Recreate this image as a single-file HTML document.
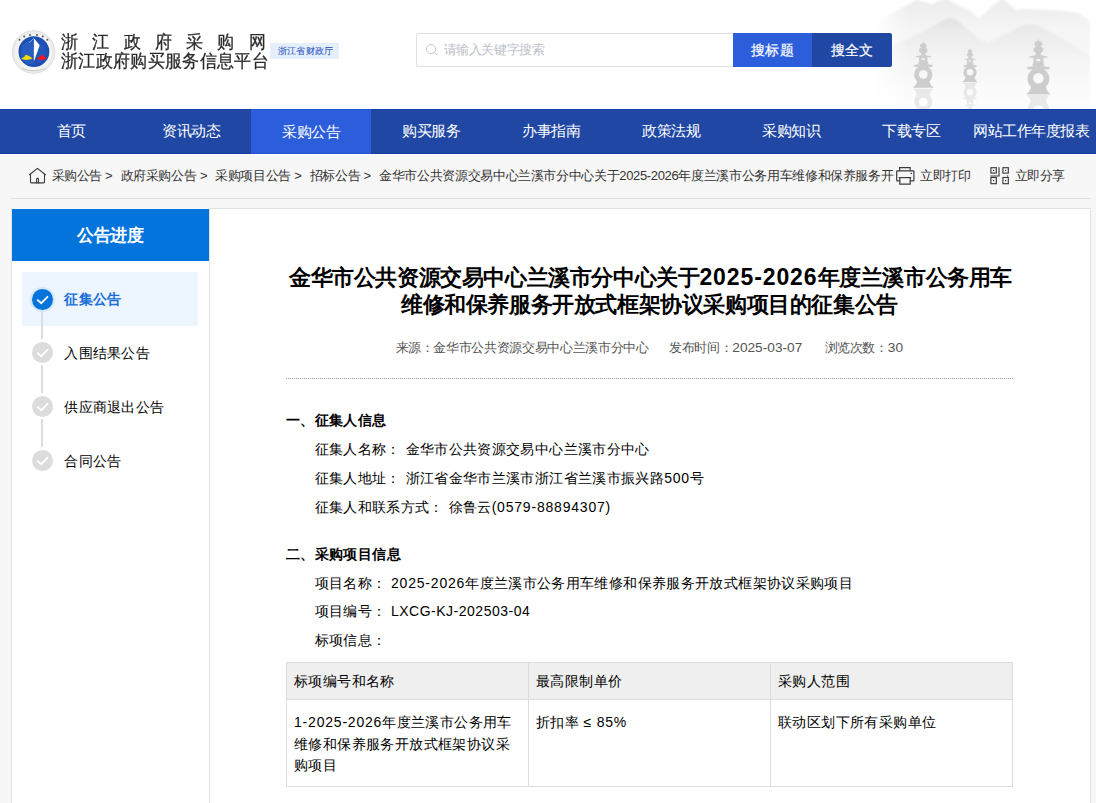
<!DOCTYPE html>
<html><head><meta charset="utf-8">
<style>
*{margin:0;padding:0;box-sizing:border-box}
html,body{width:1096px;height:803px;overflow:hidden;background:#f7f7f7;font-family:"Liberation Sans",sans-serif;color:#333}
.a{position:absolute;white-space:nowrap}
#header{position:absolute;left:0;top:0;width:1096px;height:109px;background:#fff;overflow:hidden}
#nav{position:absolute;left:0;top:109px;width:1096px;height:45px;background:#1f47a3;border-top:1px solid #163e9b;border-bottom:1px solid #163e9b}
#nav .it{position:absolute;top:-1px;height:45px;width:120px;text-align:center;line-height:44px;font-size:15px;letter-spacing:-.5px;color:#fff}
#nav .on{background:#2c5ddb;border-top:1px solid #2254d8;border-bottom:1px solid #2254d8}
#navw{position:absolute;left:0;top:154px;width:1096px;height:1px;background:#fdfdfb}
.cr{position:absolute;top:167px;font-size:13px;letter-spacing:-.35px;line-height:18px;color:#333;white-space:nowrap}
.gt{position:absolute;top:167px;font-size:13px;line-height:18px;color:#333}
.t14{font-size:14px;letter-spacing:.3px;line-height:18px;color:#000}
.step{position:absolute;left:22px;width:176px;height:54px}
.step.on{background:#edf5fe}
.cc{position:absolute;width:21px;height:21px;border-radius:50%;background:#dcdcdc}
.cc.on{background:#0474dc;box-shadow:0 0 0 2px #d3e6fb}
.cc svg{position:absolute;left:4px;top:5px}
.vl{position:absolute;left:41px;width:2px;background:#dcdcdc}
.ttl{position:absolute;font-size:22px;letter-spacing:-0.4px;font-weight:bold;color:#000;line-height:27px;white-space:nowrap}
.ttl .d{font-size:23px;letter-spacing:.9px}
.meta{position:absolute;top:339px;font-size:13px;letter-spacing:-.35px;color:#555;line-height:18px;white-space:nowrap}
.art{position:absolute;font-size:14px;letter-spacing:.37px;color:#000;line-height:18px;white-space:nowrap}
.art b{color:#000}
.n{letter-spacing:.8px}
.md{font-size:13.7px;letter-spacing:0}
.tb{position:absolute;background:#ddd}
.td{position:absolute;font-size:14px;letter-spacing:.4px;color:#000;line-height:21.7px;white-space:nowrap}
</style></head><body>
<div id="header">
  <!-- mountains -->
  <svg class="a" style="left:850px;top:0" width="246" height="109" viewBox="850 0 246 109">
    <defs>
      <linearGradient id="mt1" gradientUnits="userSpaceOnUse" x1="0" y1="0" x2="0" y2="60">
        <stop offset="0" stop-color="#ebebeb"/>
        <stop offset=".35" stop-color="#f3f3f3"/>
        <stop offset="1" stop-color="#fafafa"/>
      </linearGradient>
      <linearGradient id="mt2" gradientUnits="userSpaceOnUse" x1="0" y1="17" x2="0" y2="100">
        <stop offset="0" stop-color="#e0e0e0"/>
        <stop offset=".18" stop-color="#ebebeb"/>
        <stop offset=".5" stop-color="#f4f4f4"/>
        <stop offset="1" stop-color="#fdfdfd"/>
      </linearGradient>
      <linearGradient id="lf" gradientUnits="userSpaceOnUse" x1="872" y1="0" x2="908" y2="0">
        <stop offset="0" stop-color="#fff" stop-opacity="1"/>
        <stop offset="1" stop-color="#fff" stop-opacity="0"/>
      </linearGradient>
      <filter id="bl" x="-20%" y="-20%" width="140%" height="140%"><feGaussianBlur stdDeviation="1.2"/></filter>
      <mask id="pm" maskUnits="userSpaceOnUse" x="-15" y="-2" width="30" height="60">
        <g fill="#fff">
          <path d="M0 0 L1.1 3.2 L-1.1 3.2Z"/>
          <ellipse cx="0" cy="5.6" rx="3.9" ry="3"/>
          <ellipse cx="0" cy="11.2" rx="5" ry="3.4"/>
          <rect x="-2.6" y="13.5" width="5.2" height="3.5"/>
          <path d="M-9.5 18.2 Q-5 17 0 16.3 Q5 17 9.5 18.2 L8.5 19.2 L-8.5 19.2Z"/>
          <rect x="-5" y="19" width="10" height="6.6"/>
          <rect x="-5.8" y="25.3" width="11.6" height="2.6"/>
          <path d="M-11.5 28.6 Q-6 27.8 0 27.2 Q6 27.8 11.5 28.6 L10.3 31 L-10.3 31Z"/>
          <circle cx="0" cy="40.2" r="10.9"/>
          <path d="M-7.5 48.5 Q-8.5 53.5 -12.5 55.7 L12.5 55.7 Q8.5 53.5 7.5 48.5Z"/>
        </g>
        <g fill="#000">
          <rect x="-2" y="20.5" width="4" height="2.2"/>
          <circle cx="0" cy="39.8" r="5.2"/>
        </g>
      </mask>
      
    </defs>
    <g filter="url(#bl)">
      <path d="M860 40 Q875 25 890 14 Q905 6 917 0 Q925 2 932 4.5 Q940 0 946 -1 Q958 6 969 10 Q975 14 979 18 Q992 6 1002 -1 Q1010 5 1016 10 Q1024 8 1031 9 Q1055 10 1076 12 Q1085 16 1090 22 L1090 109 L860 109Z" fill="url(#mt1)"/>
      <path d="M860 70 Q875 55 894 45 Q920 34 942 21 Q950 15 958 21 Q975 37 987 43 Q1000 38 1015 29 Q1030 21 1042 28 Q1070 42 1090 56 L1090 109 L860 109Z" fill="url(#mt2)"/>
    </g>
    <rect x="850" y="0" width="90" height="109" fill="url(#lf)"/>
    <rect x="1091" y="0" width="5" height="109" fill="#fff"/>
    <g transform="translate(923.3 41) scale(0.84)"><rect x="-15" y="-2" width="30" height="60" fill="#cdcdcd" mask="url(#pm)"/></g>
    <g transform="translate(970 48) scale(0.61)"><rect x="-15" y="-2" width="30" height="60" fill="#cdcdcd" mask="url(#pm)"/></g>
    <g transform="translate(1038.4 38.5)"><rect x="-15" y="-2" width="30" height="60" fill="#cdcdcd" mask="url(#pm)"/></g>
    <g opacity=".4">
      <g transform="translate(923.3 135.5) scale(0.84 -0.84)"><rect x="-15" y="-2" width="30" height="60" fill="#cdcdcd" mask="url(#pm)"/></g>
      <g transform="translate(970 116.5) scale(0.61 -0.61)"><rect x="-15" y="-2" width="30" height="60" fill="#cdcdcd" mask="url(#pm)"/></g>
      <g transform="translate(1038.4 150.2) scale(1 -1)"><rect x="-15" y="-2" width="30" height="60" fill="#cdcdcd" mask="url(#pm)"/></g>
    </g>
  </svg>
  <!-- logo -->
  <svg class="a" style="left:11px;top:29px" width="46" height="47" viewBox="11 29 46 47">
    <defs><filter id="lb"><feGaussianBlur stdDeviation=".35"/></filter></defs>
    <circle cx="33.6" cy="52" r="21.3" fill="#ebebeb"/>
    <circle cx="33.6" cy="52" r="21.3" fill="none" stroke="#dcdcdc" stroke-width=".9"/>
    <circle cx="33.6" cy="52" r="18.6" fill="#f3f3f3"/>
    <g fill="#5a5a5a" filter="url(#lb)">
      <circle cx="19.6" cy="39.8" r="1"/><circle cx="24.2" cy="36.6" r="1"/><circle cx="30" cy="35" r="1"/><circle cx="37" cy="35" r="1"/><circle cx="42.8" cy="36.6" r="1"/><circle cx="47.4" cy="39.8" r="1"/>
    </g>
    <path d="M22 68.5 Q33.6 73 45.5 68.5" fill="none" stroke="#9a9a9a" stroke-width=".7" opacity=".6"/>
    <circle cx="33.9" cy="51.7" r="15.4" fill="#1c50b3"/>
    <path d="M22 46 Q26 41 31 40.5 L33.5 41 L33.5 64 Q28 66 24 61 Q20 57 21.5 51 Z" fill="#2b62c6" opacity=".75"/>
    <path d="M36 42 Q42 43 45 48 Q47 54 44 60 L38 63 Z" fill="#245ac0" opacity=".6"/>
    <path d="M29.1 42.8 L33.9 38.3" stroke="#8fb3ea" stroke-width=".9"/>
    <path d="M33.9 38.2 L39.7 45.3 L34.3 60.4 L33.8 60.4 Z" fill="#fff"/>
    <path d="M21 58.5 Q23.5 57.6 25.2 56 L24.6 55.2 Q27 54.8 28.6 55.8 Q31 57 32.4 58.6 Q30 59.9 26 59.9 Q22.6 59.8 21 58.5Z" fill="#f3dd00"/>
    <path d="M36.6 58.9 Q38.6 57.2 40.4 56 L40.9 55 Q43 54.7 44.2 56 Q45.6 57.3 46.7 58.9 Q44 60 41 60 Q38.2 60 36.6 58.9Z" fill="#e8192a"/>
  </svg>
  <div class="a" style="left:61px;top:30.5px;font-size:17.4px;line-height:22px;color:#2a2a2a;-webkit-text-stroke:.25px #2a2a2a;letter-spacing:14.3px;transform:scaleY(1.06);transform-origin:0 50%">浙江政府采购网</div>
  <div class="a" style="left:61px;top:49.5px;font-size:17.4px;line-height:22px;color:#2a2a2a;-webkit-text-stroke:.25px #2a2a2a;letter-spacing:.35px;transform:scaleY(1.06);transform-origin:0 50%">浙江政府购买服务信息平台</div>
  <div class="a" style="left:270px;top:43px;width:69px;height:16px;background:#e4eefc;color:#3059bd;font-size:9px;letter-spacing:.2px;text-indent:2.2px;-webkit-text-stroke:.1px #3059bd;line-height:17px;text-align:center">浙江省财政厅</div>
  <div class="a" style="left:416px;top:33px;width:318px;height:34px;border:1px solid #dcdfe6;border-radius:2px 0 0 2px;background:#fff"></div>
  <svg class="a" style="left:425px;top:42.5px" width="14" height="14" viewBox="0 0 14 14"><circle cx="6.1" cy="6.1" r="4.6" fill="none" stroke="#c2c5cc" stroke-width="1"/><path d="M9.4 9.5 L12.2 12.3" stroke="#c2c5cc" stroke-width="1"/></svg>
  <div class="a" style="left:443.5px;top:40.5px;font-size:13.4px;letter-spacing:-.35px;line-height:18px;color:#bcc0c8">请输入关键字搜索</div>
  <div class="a" style="left:733px;top:33px;width:79px;height:34px;background:#2c5ddb;color:#fff;font-size:14px;-webkit-text-stroke:.2px #fff;letter-spacing:.3px;line-height:34px;text-align:center;border-radius:0">搜标题</div>
  <div class="a" style="left:812px;top:33px;width:80px;height:34px;background:#1f47a3;color:#fff;font-size:14px;-webkit-text-stroke:.2px #fff;letter-spacing:.3px;line-height:34px;text-align:center;border-radius:0 2px 2px 0">搜全文</div>
</div>
<div id="nav">
  <div class="it" style="left:11px">首页</div>
  <div class="it" style="left:131px">资讯动态</div>
  <div class="it on" style="left:251px">采购公告</div>
  <div class="it" style="left:371px">购买服务</div>
  <div class="it" style="left:491px">办事指南</div>
  <div class="it" style="left:611px">政策法规</div>
  <div class="it" style="left:731px">采购知识</div>
  <div class="it" style="left:851px">下载专区</div>
  <div class="it" style="left:971px">网站工作年度报表</div>
</div>
<div id="navw"></div>
<!-- breadcrumb -->
<svg class="a" style="left:27px;top:165px" width="21" height="21" viewBox="27 165 21 21"><g fill="none" stroke="#3a3a3a" stroke-width="1.1" stroke-linejoin="round" stroke-linecap="round"><path d="M29.4 174.7 L37.45 168.4 L45.5 174.7"/><path d="M30.5 174.2 V182 Q30.5 182.9 31.4 182.9 H43.6 Q44.5 182.9 44.5 182 V174.2"/><path d="M36.6 182.9 V179.3 Q36.6 178.4 37.55 178.4 Q38.5 178.4 38.5 179.3 V182.9"/></g></svg>
<div class="cr" style="left:51.5px">采购公告</div>
<div class="gt" style="left:105px">&gt;</div>
<div class="cr" style="left:120.5px">政府采购公告</div>
<div class="gt" style="left:200px">&gt;</div>
<div class="cr" style="left:215px">采购项目公告</div>
<div class="gt" style="left:294.3px">&gt;</div>
<div class="cr" style="left:309.6px">招标公告</div>
<div class="gt" style="left:363.5px">&gt;</div>
<div class="cr" style="left:379px;width:515px;overflow:hidden">金华市公共资源交易中心兰溪市分中心关于2025-2026年度兰溪市公务用车维修和保养服务开</div>
<svg class="a" style="left:894px;top:165px" width="22" height="22" viewBox="894 165 22 22"><g fill="none" stroke="#3a3a3a" stroke-width="1.2"><path d="M899.6 170.8 V167.7 H910.2 V170.8"/><path d="M899.6 180.9 H897.4 Q896.7 180.9 896.7 180.2 V171.5 Q896.7 170.8 897.4 170.8 H913.2 Q913.9 170.8 913.9 171.5 V180.2 Q913.9 180.9 913.2 180.9 H910.2"/><path d="M898.8 177.6 H911.2"/><path d="M899.8 177.6 V184.1 H910.2 V177.6"/></g><rect x="910.6" y="172.8" width="1.4" height="1.2" fill="#3a3a3a"/></svg>
<div class="cr" style="left:920px">立即打印</div>
<svg class="a" style="left:988px;top:165px" width="22" height="22" viewBox="988 165 22 22"><g fill="none" stroke="#3a3a3a" stroke-width="1.15"><rect x="990.9" y="167.7" width="5.4" height="5.4"/><rect x="1002.9" y="167.7" width="5.4" height="5.4"/><rect x="990.9" y="177.5" width="5.4" height="6.2"/><rect x="1002.9" y="177.5" width="5.4" height="6.2"/><path d="M999 167.2 V176.4 M990.3 176 H999.5"/></g><g fill="#3a3a3a"><rect x="993" y="169.8" width="1.2" height="1.2"/><rect x="1005" y="169.8" width="1.2" height="1.2"/><rect x="993" y="180" width="1.2" height="1.2"/><rect x="1005" y="180" width="1.2" height="1.2"/><rect x="1006.9" y="175.4" width="1.3" height="1.2"/></g></svg>
<div class="cr" style="left:1014.5px">立即分享</div>
<div class="a" style="left:11px;top:198px;width:1080px;height:1px;background:#e0e0e0"></div>
<!-- main -->
<div class="a" style="left:209px;top:208px;width:882px;height:700px;background:#fff;border:1px solid #e2e2e2"></div>
<div class="a" style="left:11px;top:209px;width:199px;height:700px;background:#fff;border-left:1px solid #e2e2e2;border-right:1px solid #e2e2e2"></div>
<div class="a" style="left:12px;top:209px;width:197px;height:52px;background:#0474dd;color:#fff;font-size:17px;letter-spacing:-.6px;text-indent:-.6px;font-weight:bold;text-align:center;line-height:54px">公告进度</div>
<div class="step on" style="top:272px"></div>
<div class="vl" style="top:311px;height:28px"></div>
<div class="vl" style="top:365px;height:28px"></div>
<div class="vl" style="top:419px;height:28px"></div>
<div class="cc on" style="left:31.6px;top:288.5px"><svg width="13" height="11" viewBox="0 0 13 11"><path d="M1.2 5.6 L5.2 9.2 L12 2.4" fill="none" stroke="#fff" stroke-width="1.9"/></svg></div>
<div class="cc" style="left:31.5px;top:342.2px"><svg width="13" height="11" viewBox="0 0 13 11"><path d="M1.2 5.6 L5.2 9.2 L12 2.4" fill="none" stroke="#fff" stroke-width="1.9"/></svg></div>
<div class="cc" style="left:31.5px;top:396.2px"><svg width="13" height="11" viewBox="0 0 13 11"><path d="M1.2 5.6 L5.2 9.2 L12 2.4" fill="none" stroke="#fff" stroke-width="1.9"/></svg></div>
<div class="cc" style="left:31.5px;top:450.2px"><svg width="13" height="11" viewBox="0 0 13 11"><path d="M1.2 5.6 L5.2 9.2 L12 2.4" fill="none" stroke="#fff" stroke-width="1.9"/></svg></div>
<div class="a t14" style="left:64.3px;top:290px;color:#1a6ed8;font-weight:bold">征集公告</div>
<div class="a t14" style="left:64.3px;top:344px">入围结果公告</div>
<div class="a t14" style="left:64.3px;top:398px">供应商退出公告</div>
<div class="a t14" style="left:64.3px;top:452px">合同公告</div>
<!-- title -->
<div class="ttl" style="left:289px;top:264px">金华市公共资源交易中心兰溪市分中心关于<span class="d">2025-2026</span>年度兰溪市公务用车</div>
<div class="ttl" style="left:401px;top:291px">维修和保养服务开放式框架协议采购项目的征集公告</div>
<div class="meta" style="left:395.5px">来源：金华市公共资源交易中心兰溪市分中心</div>
<div class="meta" style="left:669px">发布时间：<span class="md">2025-03-07</span></div>
<div class="meta" style="left:824.5px">浏览次数：<span class="md">30</span></div>
<div class="a" style="left:286px;top:378px;width:728px;height:1px;background:repeating-linear-gradient(to right,#9c9c9c 0 1px,transparent 1px 2px)"></div>
<!-- article -->
<div class="art" style="left:286px;top:411px"><b>一、征集人信息</b></div>
<div class="art" style="left:314.5px;top:440px">征集人名称：</div><div class="art" style="left:405.5px;top:440px">金华市公共资源交易中心兰溪市分中心</div>
<div class="art" style="left:314.5px;top:469px">征集人地址：</div><div class="art" style="left:405.5px;top:469px">浙江省金华市兰溪市浙江省兰溪市振兴路<span class="n">500</span>号</div>
<div class="art" style="left:314.5px;top:498px">征集人和联系方式：</div><div class="art" style="left:448.5px;top:498px">徐鲁云<span class="n">(0579-88894307)</span></div>
<div class="art" style="left:286px;top:545px"><b>二、采购项目信息</b></div>
<div class="art" style="left:314.5px;top:573.5px">项目名称：</div><div class="art" style="left:391px;top:573.5px"><span class="n">2025-2026</span>年度兰溪市公务用车维修和保养服务开放式框架协议采购项目</div>
<div class="art" style="left:314.5px;top:602px">项目编号：</div><div class="art" style="left:391px;top:602px"><span class="n" style="letter-spacing:.5px">LXCG-KJ-202503-04</span></div>
<div class="art" style="left:314.5px;top:631px">标项信息：</div>
<!-- table -->
<div class="a" style="left:286px;top:662px;width:727px;height:37px;background:#efefef"></div>
<div class="tb" style="left:286px;top:662px;width:727px;height:1px"></div>
<div class="tb" style="left:286px;top:699px;width:727px;height:1px"></div>
<div class="tb" style="left:286px;top:786px;width:727px;height:1px"></div>
<div class="tb" style="left:286px;top:662px;width:1px;height:125px"></div>
<div class="tb" style="left:528px;top:662px;width:1px;height:125px"></div>
<div class="tb" style="left:770px;top:662px;width:1px;height:125px"></div>
<div class="tb" style="left:1012px;top:662px;width:1px;height:125px"></div>
<div class="td" style="left:294px;top:671px">标项编号和名称</div>
<div class="td" style="left:536px;top:671px">最高限制单价</div>
<div class="td" style="left:778px;top:671px">采购人范围</div>
<div class="td" style="left:294px;top:712px"><span class="n">1-2025-2026</span>年度兰溪市公务用车<br>维修和保养服务开放式框架协议采<br>购项目</div>
<div class="td" style="left:536px;top:712px">折扣率 <span class="n">≤ 85%</span></div>
<div class="td" style="left:778px;top:712px">联动区划下所有采购单位</div>
</body></html>
